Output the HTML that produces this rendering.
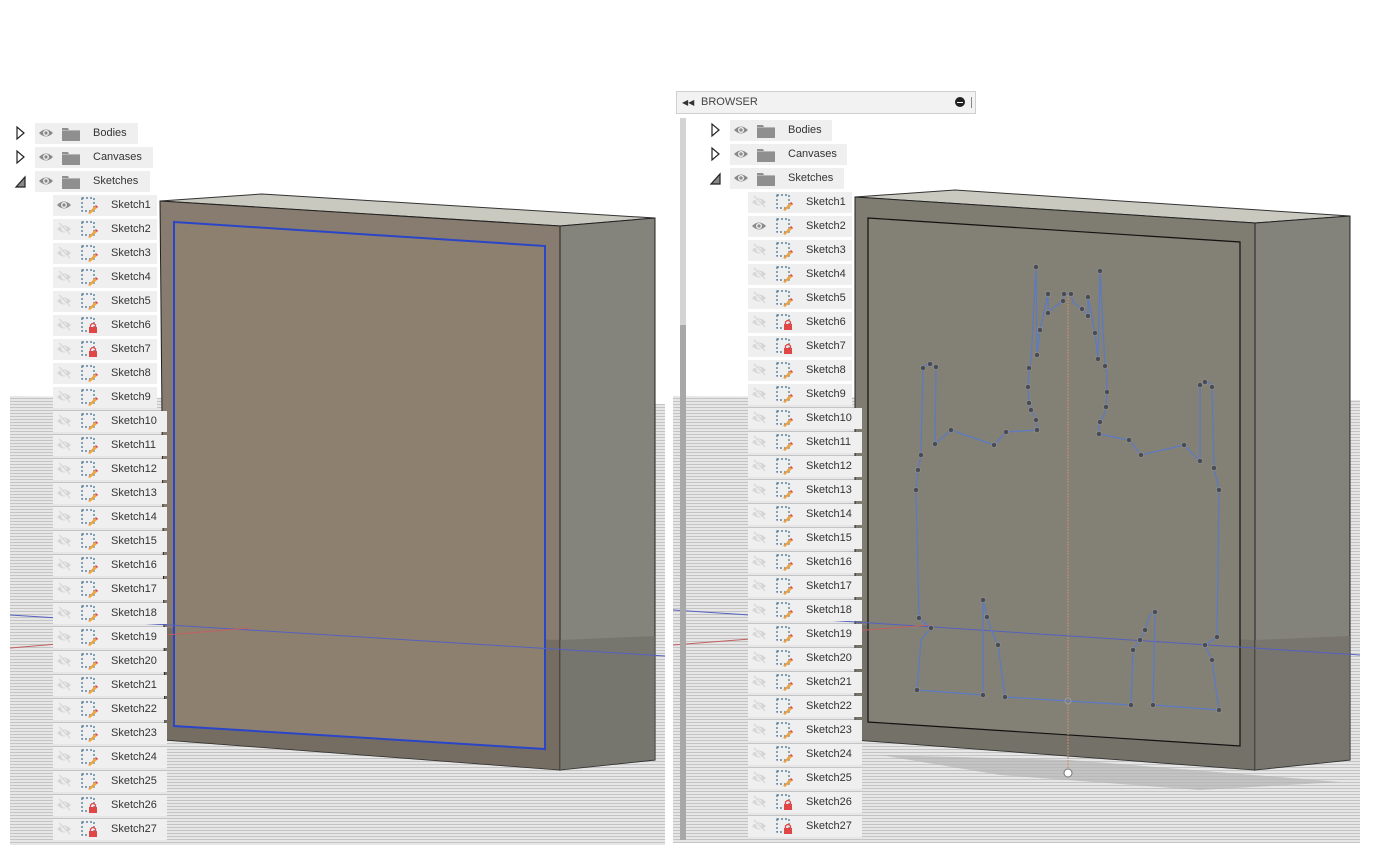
<!DOCTYPE html>
<html><head><meta charset="utf-8"><style>
body{margin:0;width:1378px;height:866px;background:#fff;position:relative;overflow:hidden;font-family:"Liberation Sans",sans-serif;}
.r{position:absolute;height:21px;background:#efefef;font-size:11px;color:#333;line-height:21px;}
.r span{position:absolute;}
.r svg{position:absolute;top:2px;}
#hdr{position:absolute;left:676px;top:91px;width:298px;height:21px;background:#f2f2f2;border:1px solid #cfcfcf;font-size:11px;color:#444;line-height:21px;}
</style></head><body>
<svg width="1378" height="866" style="position:absolute;left:0;top:0">
<defs>
<pattern id="st" width="8" height="3" patternUnits="userSpaceOnUse"><rect width="8" height="3" fill="#e6e6e6"/><rect y="2" width="8" height="1" fill="#c4c4c4"/></pattern>
<symbol id="eye" viewBox="0 0 16 16"><path d="M1 8Q8 1 15 8Q8 15 1 8Z" fill="#8a8a8a"/><circle cx="8" cy="8" r="3" fill="#efefef"/><circle cx="8" cy="8" r="1.6" fill="#8a8a8a"/></symbol>
<symbol id="eyeh" viewBox="0 0 16 16"><path d="M1 8Q8 1 15 8Q8 15 1 8Z" fill="#d6d6d6"/><circle cx="8" cy="8" r="2.5" fill="#efefef"/><path d="M3 3L13 13" stroke="#efefef" stroke-width="2"/><path d="M3 2L14 13" stroke="#d6d6d6" stroke-width="1.2"/></symbol>
<symbol id="fold" viewBox="0 0 18 14"><path d="M0 1H6L7 3H18V14H0Z" fill="#8f8f8f"/><rect x="0" y="3" width="18" height="1" fill="#b5b5b5"/></symbol>
<symbol id="sk" viewBox="0 0 18 18"><rect x="2" y="2" width="12" height="13" fill="none" stroke="#3a6f95" stroke-width="1.2" stroke-dasharray="2 2"/><path d="M8 17L15 10L17 12L10 18Z" fill="#f0a340"/><path d="M15 10L17 12L18 11L16 9Z" fill="#e24040"/></symbol>
<symbol id="skl" viewBox="0 0 18 18"><rect x="2" y="2" width="12" height="13" fill="none" stroke="#3a6f95" stroke-width="1.2" stroke-dasharray="2 2"/><rect x="9" y="11" width="8" height="6" fill="#e04646"/><path d="M10.5 11V9Q13 6 15.5 9V11" fill="none" stroke="#e04646" stroke-width="1.3"/></symbol>
</defs>
<polygon points="10,396 665,404 665,845 10,845" fill="url(#st)"/>
<polygon points="160,201 262,194 655,218 560,226" fill="#c9c9c0" stroke="#333" stroke-width="1"/>
<polygon points="160,201 560,226 560,770 165,740" fill="#877c6f" stroke="#222" stroke-width="1"/>
<polygon points="165,628 560,640 560,770 165,740" fill="#6f675d" opacity="0.7"/>
<polygon points="560,226 655,218 655,760 560,770" fill="#85847c" stroke="#222" stroke-width="1"/>
<polygon points="560,640 655,636 655,760 560,770" fill="#6e6d66" opacity="0.6"/>
<polygon points="174,222 545,246 545,749 174,726" fill="#8e806f" stroke="#2b45c8" stroke-width="2"/>
<line x1="10" y1="615" x2="665" y2="656" stroke="#5560c0" stroke-width="1"/>
<line x1="10" y1="648" x2="250" y2="628" stroke="#c06060" stroke-width="1"/>
<polygon points="673,396 1360,400 1360,843 673,843" fill="url(#st)"/>
<polygon points="880,755 1070,760 1340,782 1200,790 1000,775" fill="#b4b4b4" opacity="0.7"/>
<polygon points="855,197 955,190 1350,216 1255,223" fill="#c9c9c0" stroke="#333"/>
<polygon points="855,197 1255,223 1255,770 855,740" fill="#7f7c72" stroke="#222"/>
<polygon points="855,625 1255,640 1255,770 855,740" fill="#6c6a62" opacity="0.6"/>
<polygon points="1255,223 1350,216 1350,760 1255,770" fill="#84837b" stroke="#222"/>
<polygon points="1255,640 1350,636 1350,760 1255,770" fill="#6e6d66" opacity="0.6"/>
<polygon points="868,218 1240,242 1240,746 868,722" fill="#838175" stroke="#111" stroke-width="1.2"/>
<line x1="1068" y1="295" x2="1068" y2="770" stroke="#c9906a" stroke-width="1" stroke-dasharray="2 1"/>
<circle cx="1068" cy="773" r="4" fill="#fff" stroke="#777"/>
<line x1="673" y1="610" x2="1360" y2="655" stroke="#5560c0"/>
<line x1="673" y1="645" x2="930" y2="625" stroke="#c06060"/>
<polyline fill="none" stroke="#5a7ac8" stroke-width="1.2" points="918,470 921,455 921,449 923,368 926,365 930,364 936,367 935,444 951,430 994,445 1006,432 1037,430 1036,422 1036,418 1031,410 1029,403 1028,387 1029,368 1031,362 1036,267 1037,355 1040,330 1048,294 1048,313 1053,308 1063,301 1064,294 1071,294 1073,302 1082,309 1088,316 1088,297 1095,333 1098,359 1100,271 1105,366 1107,373 1107,392 1106,407 1104,415 1100,422 1099,426 1099,434 1129,440 1141,455 1184,445 1200,461 1200,385 1205,382 1210,383 1212,387 1214,468 1219,490 1217,637 1205,645 1212,660 1219,710 1153,705 1155,612 1150,615 1145,630 1140,640 1133,650 1131,705 1068,701 1005,697 998,645 992,632 987,617 983,600 983,695 917,690 921,640 931,628 919,618 916,490 918,470"/>
<g fill="#4a4c55" stroke="#9a9a9a" stroke-width="0.6">
<circle cx="921" cy="455" r="2.6"/><circle cx="923" cy="368" r="2.6"/><circle cx="930" cy="364" r="2.6"/><circle cx="936" cy="367" r="2.6"/><circle cx="935" cy="444" r="2.6"/><circle cx="951" cy="430" r="2.6"/><circle cx="994" cy="445" r="2.6"/><circle cx="1006" cy="432" r="2.6"/><circle cx="1037" cy="430" r="2.6"/><circle cx="1036" cy="420" r="2.6"/><circle cx="1031" cy="410" r="2.6"/><circle cx="1029" cy="403" r="2.6"/><circle cx="1028" cy="387" r="2.6"/><circle cx="1029" cy="368" r="2.6"/><circle cx="1036" cy="267" r="2.6"/><circle cx="1037" cy="355" r="2.6"/><circle cx="1040" cy="330" r="2.6"/><circle cx="1048" cy="294" r="2.6"/><circle cx="1048" cy="313" r="2.6"/><circle cx="1063" cy="301" r="2.6"/><circle cx="1064" cy="294" r="2.6"/><circle cx="1071" cy="294" r="2.6"/><circle cx="1082" cy="309" r="2.6"/><circle cx="1088" cy="297" r="2.6"/><circle cx="1088" cy="316" r="2.6"/><circle cx="1095" cy="333" r="2.6"/><circle cx="1098" cy="359" r="2.6"/><circle cx="1100" cy="271" r="2.6"/><circle cx="1105" cy="366" r="2.6"/><circle cx="1107" cy="392" r="2.6"/><circle cx="1106" cy="407" r="2.6"/><circle cx="1100" cy="422" r="2.6"/><circle cx="1099" cy="434" r="2.6"/><circle cx="1129" cy="440" r="2.6"/><circle cx="1141" cy="455" r="2.6"/><circle cx="1184" cy="445" r="2.6"/><circle cx="1200" cy="461" r="2.6"/><circle cx="1200" cy="385" r="2.6"/><circle cx="1205" cy="382" r="2.6"/><circle cx="1212" cy="387" r="2.6"/><circle cx="1214" cy="468" r="2.6"/><circle cx="1219" cy="490" r="2.6"/><circle cx="1217" cy="637" r="2.6"/><circle cx="1205" cy="645" r="2.6"/><circle cx="1212" cy="660" r="2.6"/><circle cx="1219" cy="710" r="2.6"/><circle cx="1153" cy="705" r="2.6"/><circle cx="1155" cy="612" r="2.6"/><circle cx="1145" cy="630" r="2.6"/><circle cx="1140" cy="640" r="2.6"/><circle cx="1133" cy="650" r="2.6"/><circle cx="1131" cy="705" r="2.6"/><circle cx="1005" cy="697" r="2.6"/><circle cx="998" cy="645" r="2.6"/><circle cx="987" cy="617" r="2.6"/><circle cx="983" cy="600" r="2.6"/><circle cx="983" cy="695" r="2.6"/><circle cx="917" cy="690" r="2.6"/><circle cx="931" cy="628" r="2.6"/><circle cx="919" cy="618" r="2.6"/><circle cx="916" cy="490" r="2.6"/><circle cx="918" cy="470" r="2.6"/>
</g>
<circle cx="1068" cy="701" r="3" fill="none" stroke="#999"/>
<rect x="680" y="118" width="6" height="722" fill="#d4d4d4"/>
<rect x="680" y="325" width="6" height="515" fill="#a8a8a8"/>
<g fill="#fff" stroke="#222" stroke-width="1.2">
<path d="M17 127V139L24 133Z"/><path d="M17 151V163L24 157Z"/><path d="M16 187L25 177V187Z" fill="#888"/>
<path d="M712 124V136L719 130Z"/><path d="M712 148V160L719 154Z"/><path d="M711 184L720 174V184Z" fill="#888"/>
</g>
</svg>
<div id="hdr"><span style="position:absolute;left:5px;font-size:8px;color:#333">◀◀</span><span style="position:absolute;left:24px">BROWSER</span><span style="position:absolute;left:278px;top:5px;width:10px;height:10px;border-radius:5px;background:#222"></span><span style="position:absolute;left:280px;top:10px;width:6px;height:1px;background:#fff"></span><span style="position:absolute;left:294px;top:5px;width:1px;height:11px;background:#888"></span></div>
<div id="tree"></div>
<script>
var h='';
function tp(x,y,w,t){h+='<div class="r" style="left:'+x+'px;top:'+(y-10)+'px;width:'+w+'px"><svg width="16" height="16" style="left:3px"><use href="#eye"/></svg><svg width="18" height="14" style="left:27px;top:4px"><use href="#fold"/></svg><span style="left:58px">'+t+'</span></div>';}
function sk(x,y,w,n,vis,lock){h+='<div class="r" style="left:'+x+'px;top:'+(y-10)+'px;width:'+w+'px"><svg width="16" height="16" style="left:3px"><use href="#'+(vis?'eye':'eyeh')+'"/></svg><svg width="18" height="18" style="left:27px;top:1px"><use href="#'+(lock?'skl':'sk')+'"/></svg><span style="left:58px">Sketch'+n+'</span></div>';}
var L=[6,7,26,27];
tp(35,133,103,'Bodies');tp(35,157,118,'Canvases');tp(35,181,115,'Sketches');
tp(730,130,102,'Bodies');tp(730,154,117,'Canvases');tp(730,178,114,'Sketches');
for(var i=1;i<=27;i++){var lk=L.indexOf(i)>=0;var w=i<10?104:114;
sk(53,205+24*(i-1),w,i,i==1,lk);sk(748,202+24*(i-1),w,i,i==2,lk);}
document.getElementById('tree').innerHTML=h;
</script>
</body></html>
